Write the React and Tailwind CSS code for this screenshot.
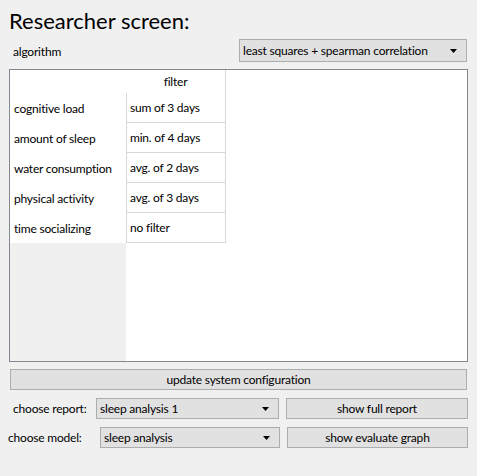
const rows = [
  ['cognitive load', 'sum of 3 days'],
  ['amount of sleep', 'min. of 4 days'],
  ['water consumption', 'avg. of 2 days'],
  ['physical activity', 'avg. of 3 days'],
  ['time socializing', 'no filter'],
];

function Caret() {
  return (
    <svg width="7" height="4" viewBox="0 0 7 4" className="shrink-0">
      <path d="M0 0 L7 0 L3.5 4 Z" fill="#000" />
    </svg>
  );
}

function Combo({ value, className }) {
  return (
    <div className={`flex items-center justify-between bg-[#e1e1e1] border border-[#adadad] pl-[3px] pr-[9px] ${className}`}>
      <span className="whitespace-nowrap">{value}</span>
      <Caret />
    </div>
  );
}

function Button({ children, className }) {
  return (
    <div className={`h-[21px] flex items-center justify-center bg-[#e1e1e1] border border-[#adadad] ${className}`}>
      {children}
    </div>
  );
}

export default function App() {
  return (
    <div
      className="w-[477px] h-[476px] bg-[#f0f0f0] text-black text-[12px] tracking-[-0.2px] leading-none overflow-hidden"
      style={{ fontFamily: 'Lato, "Open Sans", sans-serif' }}
    >
      <h1 className="pl-[9px] pt-[9px] h-[39px] text-[22px] leading-[24px] tracking-normal">Researcher screen:</h1>

      <div className="flex items-center justify-between pl-[13px] pr-[10px]">
        <span className="mt-[3px]">algorithm</span>
        <Combo value="least squares + spearman correlation" className="w-[228px] h-[23px]" />
      </div>

      <div className="mt-[7px] mx-[9px] h-[293px] border border-[#828790] bg-white flex">
        <div className="w-[116px] flex flex-col">
          <div className="h-[23px]"></div>
          {rows.map(([label]) => (
            <div key={label} className="h-[30px] flex items-center pl-[4px] pt-[2px]">{label}</div>
          ))}
          <div className="flex-1 bg-[#f0f0f0]"></div>
        </div>
        <div className="w-[100px] flex flex-col">
          <div className="h-[23px] flex items-center justify-center border-r border-[#d8d8d8]">filter</div>
          {rows.map(([label, val]) => (
            <div key={label} className="h-[30px] flex items-center pl-[3px] border-l border-b border-r border-[#d8d8d8]">{val}</div>
          ))}
        </div>
      </div>

      <Button className="mt-[7px] mx-[10px]">update system configuration</Button>

      <div className="mt-[8px] flex items-center h-[21px]">
        <span className="w-[96px] pl-[13px]">choose report:</span>
        <Combo value="sleep analysis 1" className="w-[183px] h-[21px]" />
        <Button className="ml-[7px] w-[182px]">show full report</Button>
      </div>

      <div className="mt-[8px] flex items-center h-[21px]">
        <span className="w-[100px] pl-[8px]">choose model:</span>
        <Combo value="sleep analysis" className="w-[180px] h-[21px]" />
        <Button className="ml-[7px] w-[181px]">show evaluate graph</Button>
      </div>
    </div>
  );
}
